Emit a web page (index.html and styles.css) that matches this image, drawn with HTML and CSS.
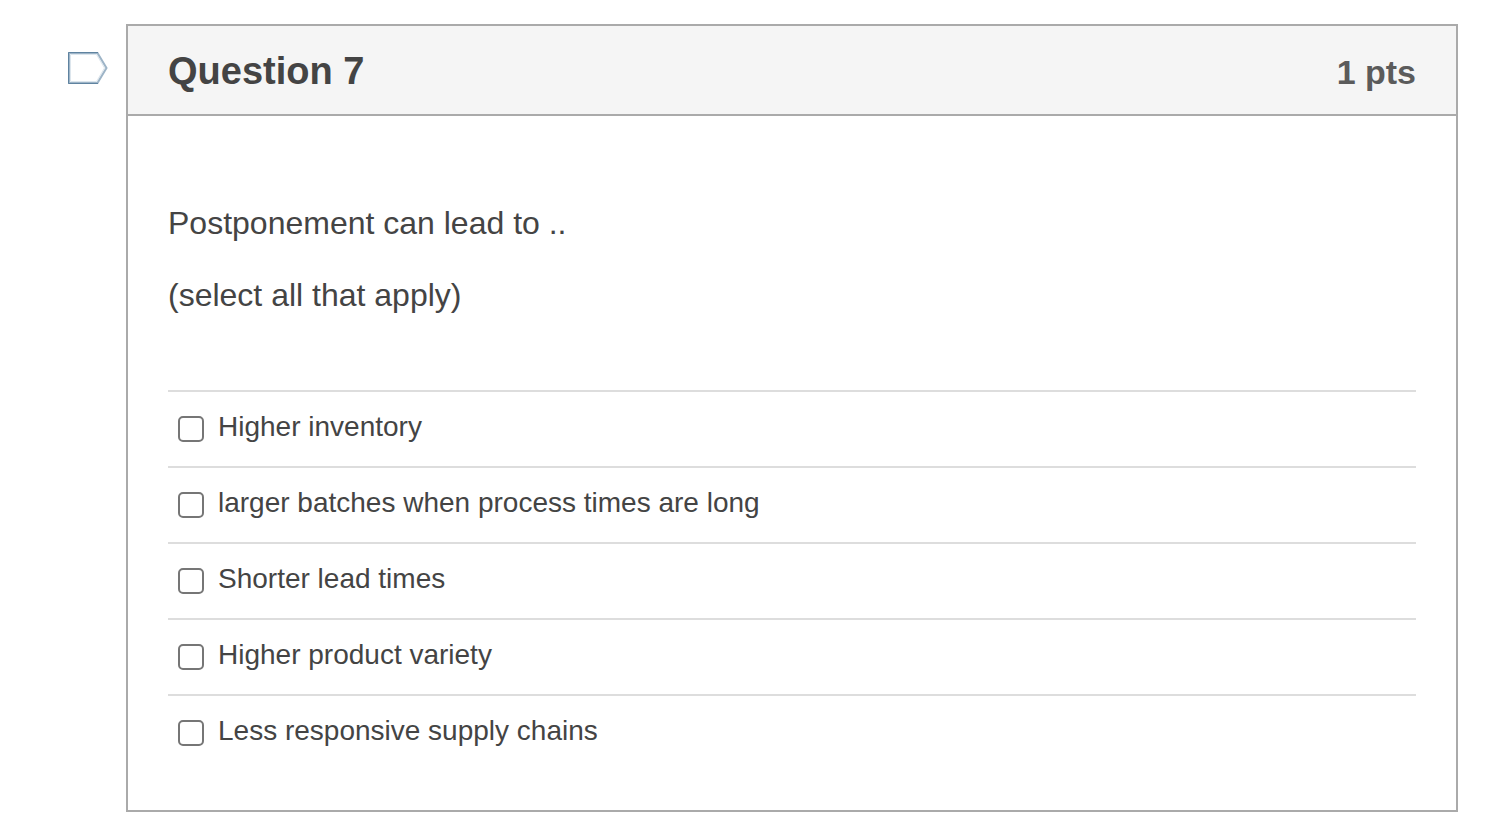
FILE: index.html
```html
<!DOCTYPE html>
<html lang="en">
<head>
    <meta charset="UTF-8">
    <meta name="viewport" content="width=device-width, initial-scale=1.0">
    <title>Question 7</title>
    <link rel="stylesheet" href="styles.css">
</head>
<body>
    <main class="question-row">
        <button type="button" class="flag" aria-label="Flag question">
            <svg width="40" height="32" viewBox="0 0 40 32" fill="none">
                <path d="M2.500 2.500H28.500L36.500 16L28.500 29.500H2.500Z" stroke="#dde6ed" stroke-width="1"/>
                <path d="M1 1H29.500L38.500 16L29.500 31H1Z" stroke="#9db4c7" stroke-width="2"/>
                <path d="M30 31.500H0.500V0.500H30" stroke="#5f83a0" stroke-width="1"/>
            </svg>
        </button>

        <section class="question">
            <header class="question-header">
                <h1>Question 7</h1>
                <span class="points">1 pts</span>
            </header>

            <form class="question-body">
                <div class="question-text">
                    <p>Postponement can lead to ..</p>
                    <p>(select all that apply)</p>
                </div>

                <div class="answers">
                    <div class="answer">
                        <input type="checkbox" id="answer-1">
                        <label for="answer-1">Higher inventory</label>
                    </div>
                    <div class="answer">
                        <input type="checkbox" id="answer-2">
                        <label for="answer-2">larger batches when process times are long</label>
                    </div>
                    <div class="answer">
                        <input type="checkbox" id="answer-3">
                        <label for="answer-3">Shorter lead times</label>
                    </div>
                    <div class="answer">
                        <input type="checkbox" id="answer-4">
                        <label for="answer-4">Higher product variety</label>
                    </div>
                    <div class="answer">
                        <input type="checkbox" id="answer-5">
                        <label for="answer-5">Less responsive supply chains</label>
                    </div>
                </div>
            </form>
        </section>
    </main>
</body>
</html>
```
FILE: styles.css
```css
* {
    box-sizing: border-box;
}

body {
    margin: 0;
    background-color: #fff;
    color: #444;
    font-family: "Helvetica Neue", Helvetica, "Liberation Sans", Arial, sans-serif;
}

.question-row {
    display: flex;
    align-items: flex-start;
    gap: 18px;
    padding: 24px 48px 6px 68px;
}

.flag {
    display: flex;
    margin-top: 28px;
    padding: 0;
    border: none;
    background: none;
    cursor: pointer;
}

.question {
    flex: 1;
    border: 2px solid #aaa;
}

.question-header {
    display: flex;
    justify-content: space-between;
    align-items: center;
    height: 90px;
    padding: 2px 40px 0;
    background-color: #f5f5f5;
    border-bottom: 2px solid #aaa;
}

h1 {
    margin: 0;
    font-size: 38px;
    line-height: 48px;
}

.points {
    padding-top: 2px;
    color: #5b5b5b;
    font-size: 34px;
    font-weight: bold;
    line-height: 48px;
}

.question-body {
    padding: 83px 40px 40px;
}

.question-text {
    margin-bottom: 71px;
    font-size: 32px;
    line-height: 48px;
}

.question-text p {
    margin: 0 0 24px;
}

.question-text p:last-child {
    margin-bottom: 0;
}

.answer {
    display: flex;
    align-items: center;
    gap: 14px;
    height: 76px;
    padding-left: 10px;
    border-top: 2px solid #ddd;
}

.answer input {
    appearance: none;
    width: 26px;
    height: 26px;
    margin: 0;
    border: 2px solid #767676;
    border-radius: 5px;
    background-color: #fff;
}

.answer input:checked {
    background-color: #0374b5;
}

.answer label {
    padding-bottom: 4px;
    font-size: 28px;
    line-height: 40px;
}
```
